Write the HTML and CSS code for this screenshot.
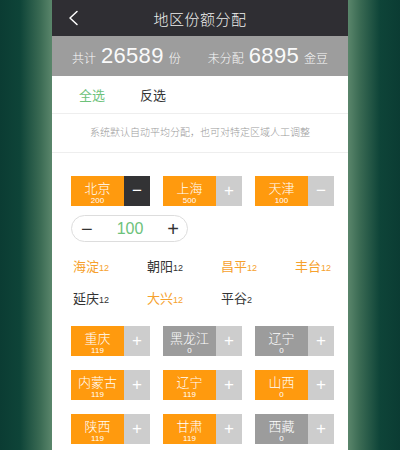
FILE: index.html
```html
<!DOCTYPE html>
<html lang="zh-CN">

<head>
    <meta charset="UTF-8">
    <meta name="viewport" content="width=device-width, initial-scale=1.0">
    <title>地区份额分配</title>
    <link rel="stylesheet" href="styles.css">
</head>

<body>
    <div class="phone">

        <!-- Navbar -->
        <header class="nav">
            <a class="nav-back" href="#">
                <svg width="12" height="16" viewBox="0 0 12 16">
                    <path d="M10 1.5 L3 8 L10 14.5" fill="none" stroke="#fff" stroke-width="1.5" stroke-linecap="round" stroke-linejoin="round" />
                </svg>
            </a>
            <div class="nav-title">地区份额分配</div>
            <div></div>
        </header>

        <!-- Totals -->
        <div class="summary">
            <div class="summary-item">
                <span class="summary-label">共计</span>
                <span class="summary-num">26589</span>
                <span class="summary-label">份</span>
            </div>
            <div class="summary-item">
                <span class="summary-label">未分配</span>
                <span class="summary-num">6895</span>
                <span class="summary-label">金豆</span>
            </div>
        </div>

        <div class="tabs">
            <span class="tab active">全选</span>
            <span class="tab">反选</span>
        </div>

        <p class="notice">系统默认自动平均分配，也可对特定区域人工调整</p>

        <div class="content">
            <div class="region-grid">
                <div class="region">
                    <div class="region-info">
                        <span class="region-name">北京</span>
                        <span class="region-count">200</span>
                    </div>
                    <button class="region-btn dark">−</button>
                </div>
                <div class="region">
                    <div class="region-info">
                        <span class="region-name">上海</span>
                        <span class="region-count">500</span>
                    </div>
                    <button class="region-btn">+</button>
                </div>
                <div class="region">
                    <div class="region-info">
                        <span class="region-name">天津</span>
                        <span class="region-count">100</span>
                    </div>
                    <button class="region-btn">−</button>
                </div>
            </div>

            <div class="stepper">
                <span class="stepper-btn">−</span>
                <span class="stepper-value">100</span>
                <span class="stepper-btn">+</span>
            </div>

            <div class="districts">
                <span class="district on">海淀<small>12</small></span>
                <span class="district">朝阳<small>12</small></span>
                <span class="district on">昌平<small>12</small></span>
                <span class="district on">丰台<small>12</small></span>
                <span class="district">延庆<small>12</small></span>
                <span class="district on">大兴<small>12</small></span>
                <span class="district">平谷<small>2</small></span>
            </div>

            <div class="region-grid">
                <div class="region">
                    <div class="region-info">
                        <span class="region-name">重庆</span>
                        <span class="region-count">119</span>
                    </div>
                    <button class="region-btn">+</button>
                </div>
                <div class="region off">
                    <div class="region-info">
                        <span class="region-name">黑龙江</span>
                        <span class="region-count">0</span>
                    </div>
                    <button class="region-btn">+</button>
                </div>
                <div class="region off">
                    <div class="region-info">
                        <span class="region-name">辽宁</span>
                        <span class="region-count">0</span>
                    </div>
                    <button class="region-btn">+</button>
                </div>
                <div class="region">
                    <div class="region-info">
                        <span class="region-name">内蒙古</span>
                        <span class="region-count">119</span>
                    </div>
                    <button class="region-btn">+</button>
                </div>
                <div class="region">
                    <div class="region-info">
                        <span class="region-name">辽宁</span>
                        <span class="region-count">119</span>
                    </div>
                    <button class="region-btn">+</button>
                </div>
                <div class="region">
                    <div class="region-info">
                        <span class="region-name">山西</span>
                        <span class="region-count">0</span>
                    </div>
                    <button class="region-btn">+</button>
                </div>
                <div class="region">
                    <div class="region-info">
                        <span class="region-name">陕西</span>
                        <span class="region-count">119</span>
                    </div>
                    <button class="region-btn">+</button>
                </div>
                <div class="region">
                    <div class="region-info">
                        <span class="region-name">甘肃</span>
                        <span class="region-count">119</span>
                    </div>
                    <button class="region-btn">+</button>
                </div>
                <div class="region off">
                    <div class="region-info">
                        <span class="region-name">西藏</span>
                        <span class="region-count">0</span>
                    </div>
                    <button class="region-btn">+</button>
                </div>
            </div>
        </div>
    </div>
</body>

</html>
```

FILE: styles.css
```css
/* General Styles */
body {
    margin: 0;
    height: 450px;
    overflow: hidden;
    font-family: "Liberation Sans", "Noto Sans CJK SC", sans-serif;
    font-weight: 300;
    background: linear-gradient(90deg, #0b3c33 0, #0e4438 20px, #3a6a53 40px, #5a866b 52px,
            #5a866b 348px, #3a6a53 360px, #0e4438 380px, #0b3c33 400px);
}

.phone {
    width: 296px;
    height: 450px;
    margin: 0 auto;
    background-color: #fff;
    overflow: hidden;
}

/* Navbar */
.nav {
    height: 36px;
    background-color: #2f2e33;
    display: grid;
    grid-template-columns: 1fr auto 1fr;
    align-items: center;
    padding: 0 15px;
}

.nav-back {
    display: flex;
    align-items: center;
}

.nav-title {
    color: #eeeeee;
    font-size: 15px;
    letter-spacing: 0.5px;
}

/* Totals bar */
.summary {
    height: 40px;
    background-color: #9d9d9d;
    display: flex;
    justify-content: space-between;
    align-items: center;
    padding: 0 20px;
    color: #fafafa;
}

.summary-item {
    display: flex;
    align-items: baseline;
    gap: 5px;
}

.summary-label {
    font-size: 12px;
}

.summary-num {
    font-size: 22px;
    letter-spacing: 0.3px;
}

/* Select tabs */
.tabs {
    height: 37px;
    display: flex;
    align-items: center;
    gap: 35px;
    padding-left: 27px;
    border-bottom: 1px solid #eeeeee;
    font-size: 13px;
    font-weight: 400;
    color: #333;
}

.tab.active {
    color: #6dc27a;
}

.notice {
    margin: 0;
    height: 38px;
    line-height: 38px;
    text-align: center;
    font-size: 10px;
    color: #9a9a9a;
    border-bottom: 1px solid #eeeeee;
}

.content {
    padding: 23px 0 0 19px;
}

/* Region cards */
.region-grid {
    display: grid;
    grid-template-columns: repeat(3, 79px);
    column-gap: 13px;
    row-gap: 14px;
}

.region {
    display: flex;
    height: 30px;
}

.region-info {
    width: 53px;
    background-color: #ff9a0e;
    color: #fff;
    display: flex;
    flex-direction: column;
    align-items: center;
    padding-top: 5px;
    box-sizing: border-box;
}

.region.off .region-info {
    background-color: #9c9c9c;
}

.region-name {
    font-size: 13px;
    line-height: 15px;
}

.region-count {
    font-size: 8px;
    line-height: 10px;
}

.region-btn {
    width: 26px;
    border: none;
    padding: 0;
    background-color: #cdcdcd;
    color: #fff;
    font-family: "Liberation Sans", sans-serif;
    font-size: 17px;
    line-height: 30px;
    cursor: pointer;
}

.region-btn.dark {
    background-color: #333335;
}

/* Amount stepper */
.stepper {
    width: 117px;
    height: 27px;
    margin-top: 9px;
    box-sizing: border-box;
    border: 1px solid #dddddd;
    border-radius: 14px;
    display: flex;
    justify-content: space-between;
    align-items: center;
    padding: 0 8px 0 9px;
}

.stepper-btn {
    font-size: 20px;
    color: #333;
    line-height: 1;
}

.stepper-value {
    font-size: 16px;
    color: #6dc27a;
}

/* District list */
.districts {
    display: grid;
    grid-template-columns: repeat(4, 74px);
    grid-auto-rows: 32px;
    align-items: center;
    margin: 7px 0 13px 2px;
}

.district {
    font-size: 13px;
    font-weight: 400;
    color: #333;
}

.district small {
    font-size: 9px;
}

.district.on {
    color: #f6a12d;
}
```
